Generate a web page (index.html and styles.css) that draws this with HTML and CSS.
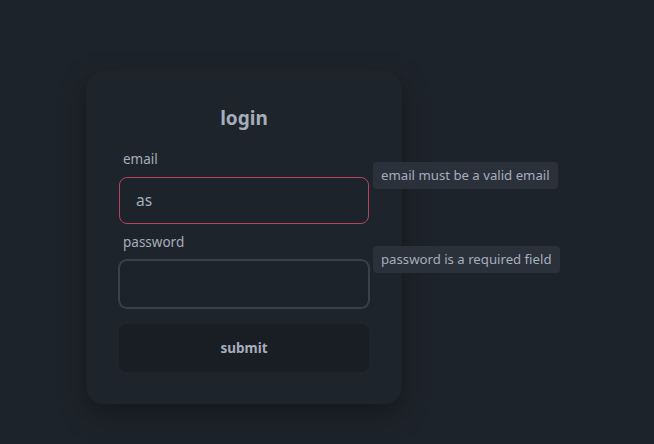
FILE: index.html
```html
<!DOCTYPE html>
<html>
<head>
<meta charset="utf-8">
<link rel="stylesheet" href="styles.css">
</head>
<body>
<div class="page">
  <form class="card">
    <h2 class="title">login</h2>
    <div class="field">
      <label class="label">email</label>
      <div class="control">
        <input class="input input-error" type="text" value="as">
        <span class="tip">email must be a valid email</span>
      </div>
    </div>
    <div class="field">
      <label class="label">password</label>
      <div class="control">
        <input class="input input-focus" type="password" value="">
        <span class="tip">password is a required field</span>
      </div>
    </div>
    <button class="btn" type="button">submit</button>
  </form>
</div>
</body>
</html>
```
FILE: styles.css
```css
* { box-sizing: border-box; }
html, body { margin: 0; padding: 0; }
body {
  background: #1d232a;
  color: #a6adbb;
  font-family: "Noto Sans", "Open Sans", sans-serif;
  width: 654px;
  height: 444px;
  overflow: hidden;
}
.page {
  padding: 72px 0 0 87px;
}
.card {
  width: 314px;
  height: 332px;
  padding: 32px;
  background: #1e242b;
  border-radius: 16px;
  box-shadow: 0 0 0 1px rgba(255,255,255,0.015), 0 10px 30px 2px rgba(0,0,0,0.22), 0 6px 12px -4px rgba(0,0,0,0.15);
  display: flex;
  flex-direction: column;
}
.title {
  margin: 0 0 9px;
  font-size: 19px;
  line-height: 28px;
  font-weight: 700;
  text-align: center;
  color: #a6adbb;
}
.field { display: flex; flex-direction: column; }
.label {
  display: block;
  padding: 8px 4px;
  font-size: 13.5px;
  line-height: 20px;
  color: #a6adbb;
}
.control { position: relative; }
.input {
  display: block;
  width: 250px;
  height: 48px;
  padding: 0 16px;
  background: #1d232a;
  color: #a6adbb;
  border: 1px solid #3a4048;
  border-radius: 8px;
  font-family: inherit;
  font-size: 15.5px;
  outline: none;
}
.input-error {
  height: 47px;
  border-color: #b8435f;
  padding-bottom: 1px;
}
.input-focus {
  border-color: #3b414a;
  box-shadow: 0 0 0 1px #3b414a;
}
.tip {
  position: absolute;
  left: 254px;
  top: -15px;
  height: 27px;
  padding: 0 8px;
  background: #2a313b;
  border-radius: 4px;
  font-size: 13.2px;
  line-height: 27px;
  white-space: nowrap;
  color: #a6adbb;
}
.input-focus + .tip { top: -14px; }
.btn {
  margin-top: 16px;
  height: 48px;
  width: 250px;
  border: none;
  border-radius: 8px;
  background: #191e24;
  color: #a6adbb;
  font-family: inherit;
  font-weight: 700;
  font-size: 13.5px;
}
```
